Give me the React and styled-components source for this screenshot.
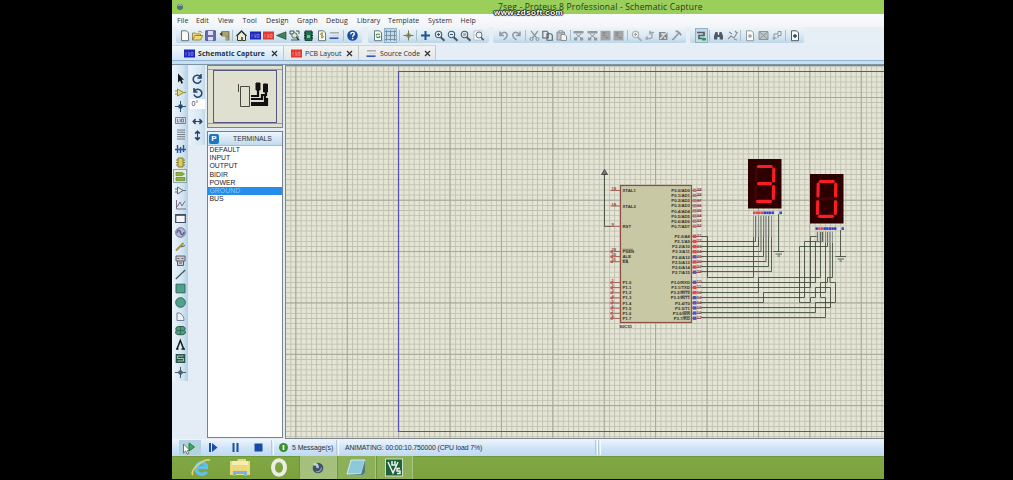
import React from "react";
import styled, { createGlobalStyle, css } from "styled-components";

const Global = createGlobalStyle`
  * { box-sizing: border-box; }
  html, body { margin: 0; background: #000; overflow: hidden; }
`;

const Screen = styled.div`
  width: 1013px;
  height: 480px;
  background: #000;
  padding-left: 172px;
  overflow: hidden;
`;
const Win = styled.div`
  width: 712px;
  height: 479px;
  display: flex;
  flex-direction: column;
  background: #e4edf5;
  overflow: hidden;
  font-family: "Open Sans", "Noto Sans", sans-serif;
  color: #2b2f36;
`;
const TitleBar = styled.header`
  position: relative;
  flex: 0 0 14px;
  background: #9bcf5c;
  display: flex;
  align-items: center;
`;
const TitleIcon = styled.svg`
  width: 8px;
  height: 8px;
  margin-left: 4px;
`;
const TitleText = styled.div`
  margin-left: 314px;
  font-size: 8.5px;
  letter-spacing: 0.18px;
  line-height: 14px;
  white-space: nowrap;
  color: #26391a;
`;
const Watermark = styled.div`
  position: absolute;
  left: 322px;
  top: 8px;
  z-index: 2;
  font: bold 8px/9px "Liberation Sans", sans-serif;
  letter-spacing: 0.45px;
  color: #fff;
  text-shadow: 0 0 1px #000, 1px 0 1px #222, -1px 0 1px #222, 0 1px 1px #222, 0 -1px 1px #222;
`;
const MenuBar = styled.nav`
  flex: 0 0 13px;
  background: linear-gradient(#f9fafb, #f2f5f8);
  display: flex;
  padding-left: 5px;
`;
const MenuItem = styled.span`
  width: ${(p) => p.$w}px;
  font-size: 7px;
  line-height: 13px;
  letter-spacing: 0.08px;
  white-space: nowrap;
`;
const ToolRow = styled.div`
  flex: 0 0 18px;
  display: flex;
  align-items: flex-start;
  padding-left: 4px;
  background: #e7eff6;
`;
const ToolGroup = styled.div`
  width: ${(p) => p.$w}px;
  height: 16px;
  margin-right: ${(p) => p.$gap || 0}px;
  padding-left: ${(p) => p.$pad}px;
  display: flex;
  align-items: center;
  background: linear-gradient(#eff5fa, #d5e6f2 65%, #bcd6e7);
  border-radius: 2px;
`;
const ToolButton = styled.span`
  flex: none;
  width: 13.3px;
  height: 15px;
  display: flex;
  align-items: center;
  justify-content: center;
  ${(p) => p.$on && css`
    background: #c3dae9;
    box-shadow: inset 0 0 0 1px #8fafc4;
  `}
`;
const ToolSep = styled.i`
  flex: none;
  width: 1px;
  height: 11px;
  margin: 0 1.7px;
  background: #a9bfce;
`;
const Glyph = styled.svg`
  width: 11px;
  height: 11px;
  flex: none;
  overflow: visible;
`;
const Tabs = styled.div`
  flex: 0 0 15px;
  display: flex;
  background: #e5eef6;
`;
const Tab = styled.div`
  width: ${(p) => p.$w}px;
  padding-left: ${(p) => p.$pad}px;
  display: flex;
  align-items: center;
  background: ${(p) => (p.$active ? "linear-gradient(#f1f8fd, #cfe4f5)" : "linear-gradient(#f2f2f1, #e4e6e8)")};
  border-right: 1px solid #bcc8d2;
  border-top: 1px solid #ccd6de;
  font-size: 6.9px;
  font-weight: ${(p) => (p.$active ? 700 : 400)};
`;
const TabLabel = styled.span`
  width: ${(p) => p.$w}px;
  margin-left: 3px;
  white-space: nowrap;
  letter-spacing: ${(p) => p.$ls || 0}px;
`;
const TabRule = styled.div`
  flex: 0 0 5px;
  background: linear-gradient(#8fb2d4 0 1px, #c8def3 1px 4px, #7d93a6 4px);
`;
const Body = styled.main`
  flex: 0 0 374px;
  display: flex;
`;
const ModeBar = styled.div`
  width: 16px;
  height: 316px;
  padding-top: 6px;
  display: flex;
  flex-direction: column;
  align-items: center;
  background: linear-gradient(90deg, #edf5fb, #cfe3f1 70%, #b1d0e4);
`;
const ModeButton = styled.span`
  flex: none;
  width: 14px;
  height: 14.03px;
  display: flex;
  align-items: center;
  justify-content: center;
  ${(p) => p.$on && css`
    background: #e7eddf;
    box-shadow: inset 0 0 0 1px #86a5b9;
  `}
`;
const OrientBar = styled.div`
  width: 16px;
  height: 80px;
  margin: 0 2px 0 1px;
  padding-top: 6px;
  display: flex;
  flex-direction: column;
  align-items: center;
  background: linear-gradient(90deg, #e9f2f9, #d6e6f2 75%, #c2d9ea);
`;
const Angle = styled.div`
  width: 15px;
  height: 10px;
  margin: 0 0 5px;
  background: #fff;
  font: 7px/10px "Liberation Sans", sans-serif;
  padding-left: 2px;
`;
const SideColumn = styled.aside`
  width: 78px;
  flex: none;
  display: flex;
  flex-direction: column;
`;
const Overview = styled.svg`
  width: 76px;
  height: 63px;
  margin-bottom: 3px;
  border: 1px solid #77828c;
  background: #dfe0d0;
`;
const Picker = styled.section`
  width: 76px;
  height: 307px;
  border: 1px solid #77828c;
  background: #fff;
  font-family: "Liberation Sans", sans-serif;
`;
const PickerHead = styled.div`
  height: 14px;
  display: flex;
  align-items: center;
  background: linear-gradient(#edf6fc, #bfdbf0);
  border-bottom: 1px solid #a7bccb;
  font-size: 6.8px;
`;
const PickBadge = styled.b`
  width: 10px;
  height: 10px;
  margin: 0 14px 0 1px;
  border-radius: 2px;
  background: #1b76c9;
  color: #fff;
  font-size: 8px;
  line-height: 10px;
  text-align: center;
`;
const PickItem = styled.div`
  height: 8.2px;
  padding-left: 1.5px;
  font-size: 6.9px;
  line-height: 8.8px;
  background: ${(p) => (p.$on ? "#248ee8" : "transparent")};
  color: ${(p) => (p.$on ? "#8cc8f5" : "#222")};
`;
const Canvas = styled.svg`
  width: 599px;
  height: 374px;
  display: block;
  flex: none;
`;
const StatusBar = styled.footer`
  flex: 0 0 17px;
  display: flex;
  align-items: center;
  background: linear-gradient(#eef5fb, #cfe3f6 55%, #c0d9f1);
  font: 6.9px/17px "Liberation Sans", sans-serif;
`;
const SimButton = styled.span`
  width: ${(p) => p.$w}px;
  height: 15px;
  display: flex;
  align-items: center;
  justify-content: center;
  background: ${(p) => (p.$on ? "#b4d3e2" : "none")};
`;
const StatusText = styled.span`
  width: ${(p) => p.$w}px;
  padding-left: ${(p) => p.$pad}px;
  white-space: nowrap;
  letter-spacing: ${(p) => p.$ls || 0}px;
`;
const Grip = styled.i`
  width: 3px;
  height: 15px;
  border-left: 1px solid #b4c9dc;
  border-right: 1px solid #f4f9fd;
`;
const TaskBar = styled.footer`
  flex: 0 0 23px;
  display: flex;
  background: linear-gradient(#6f983a 0 1px, #7fa744 1px, #7ca23f);
`;
const Task = styled.div`
  flex: none;
  width: ${(p) => p.$w}px;
  margin-right: ${(p) => p.$gap || 0}px;
  display: flex;
  align-items: center;
  justify-content: center;
  ${(p) => p.$open && css`
    background: ${p.$front ? "#a5c07c" : "#8bb057"};
    border-right: 1px solid #a9c680;
    border-left: 1px solid #6f963b;
  `}
`;
const TaskIcon = styled.svg`
  flex: none;
  width: 22px;
  height: 21px;
`;

const page = (c = "#68747e") => <path d="M2.5 .8h5l2 2.2v7.7h-7z" fill="#fbfbf6" stroke={c} />;
const chipIcon = (c) => (
  <>
    <rect x="0" y="1.5" width="11" height="8" fill={c} />
    <path d="M2 4v3.5M4 4.3h1.6M4 5.7h1.6v1.6H4M7 4.2v3.2M7 4.3h2v3H7" stroke="#fff" strokeOpacity=".5" strokeWidth=".7" fill="none" />
  </>
);
const mag = (c, extra) => (
  <>
    <path d="M6.5 7l4 3.8" stroke={c} strokeWidth="2" />
    <circle cx="4.5" cy="4.5" r="3.2" fill="#e2ebee" stroke={c} strokeWidth="1.1" />
    {extra}
  </>
);
const block = (c) => (
  <>
    <path d="M.5 1h10v2.6h-10zM1 7.5h3.2v3H1zM7 7.5h3.2v3H7z" fill={c} />
    <path d="M3 4l5 4M8 4L3 8" stroke={c} />
  </>
);

const ICONS = {
  new: page(),
  open: <path d="M.5 10V3h3l1 1h4v2M.5 10l2.3-4.5h8L8.5 10zM6 2.2c2-1.5 3-1 4 .5" fill="#f3d870" stroke="#827643" strokeWidth=".8" />,
  save: <><path d="M.7.8h9.6v9.6H.7z" fill="#6b6caf" stroke="#504f8c" /><path d="M3 1h5v4H3zM3 7h5v3.5H3z" fill="#dcdff0" /></>,
  import: <><path d="M2.5 1h8v9.5H6.5V6.5h-4z" fill="#8e8356" /><path d="M4 3h5M4 5h5M8 7v3" stroke="#d8d0a0" strokeWidth=".8" /><path d="M.5 4L3 2v4z" fill="#333" /></>,
  home: <><path d="M1.5 5.5v5h8v-5L5.5 1.5z" fill="#f0ead0" stroke="#3a3b31" /><path d="M.5 6l5-5 5 5" stroke="#23352b" strokeWidth="1.4" fill="none" /><path d="M5 7h2v3.5H5z" fill="#4c7b3a" /></>,
  isis: chipIcon("#1c28bd"),
  ares: chipIcon("#e5372f"),
  view3d: <path d="M.5 5.5L10 1.8v7.6z" fill="#3e8354" stroke="#2a4f3b" strokeWidth=".7" />,
  gerber: <><path d="M1 1h4v3H1zM7 1h3v3M2 10h7V6" fill="none" stroke="#3f5b4c" /><circle cx="5.5" cy="5.5" r="2.7" fill="#d9e4d5" stroke="#4c6c58" /><path d="M7.3 7.4l3 3" stroke="#333" strokeWidth="1.3" /></>,
  explorer: <><path d="M2 1h7v9.5H2z" fill="#19734f" stroke="#28453a" /><path d="M1 3h2M1 5.5h2M1 8h2M8 3h2M8 5.5h2M8 8h2" stroke="#222" /><path d="M4 5h3v3H4z" fill="#78c59c" /></>,
  bom: <>{page()}<path d="M7 3.3c-3-1-3 2-1 2.2s2 3-1 1.7M6 2.5v6" stroke="#9b8b20" fill="none" /></>,
  source: <><path d="M1 2.8h9" stroke="#aaa" strokeWidth="1.5" /><path d="M.5 8.2h9" stroke="#3c59bd" strokeWidth="1.7" /><path d="M3 5.5h7" stroke="#ced6e6" /></>,
  help: <><circle cx="5.5" cy="5.5" r="5.3" fill="#1b4fa4" /><path d="M3.8 4.2c0-2.6 3.7-2.3 3.5-.2C7.2 5.3 5.6 5.2 5.6 6.7M5.6 7.8v1.4" stroke="#fff" strokeWidth="1.4" fill="none" /></>,
  redraw: <>{page()}<path d="M4 5.5c.5-2 3-1.8 3.6-.4M8 6c-.5 2-3 2-3.6.4" stroke="#3c9341" fill="none" strokeWidth="1.2" /></>,
  grid: <path d="M1.5 0v11M5.5 0v11M9.5 0v11M0 1.5h11M0 5.5h11M0 9.5h11" stroke="#6b8398" strokeWidth=".8" />,
  origin: <path d="M5.5 .5v10M.5 5.5h10M5.5 3L8 5.5 5.5 8 3 5.5z" stroke="#77794b" fill="#c8ca95" />,
  pan: <path d="M5.5 1v9M1 5.5h9" stroke="#1f5195" strokeWidth="2" />,
  zin: mag("#4d5963", <path d="M4.5 3v3M3 4.5h3" stroke="#24539b" />),
  zout: mag("#4d5963", <path d="M3 4.5h3" stroke="#24539b" />),
  zall: mag("#4d5963", <path d="M3.2 3.3h2.6v2.4H3.2z" fill="#8e9aa4" />),
  zarea: <><path d="M1 1h7.5v9H1z" fill="#fff" stroke="#9aa5ad" strokeWidth=".6" /><circle cx="6" cy="5" r="3" fill="#eef3f5" stroke="#677581" /><path d="M8 7.3l2.7 3" stroke="#4c545b" strokeWidth="1.5" /></>,
  undo: <path d="M2 1.5v4h4M2.5 5C5 .8 10 2 9 6c-.4 2-2 3-3.5 4" stroke="#8f989f" fill="none" strokeWidth="1.5" />,
  redo: <path d="M9 1.5v4H5M8.5 5C6 .8 1 2 2 6c.4 2 2 3 3.5 4" stroke="#8f989f" fill="none" strokeWidth="1.5" />,
  cut: <><path d="M2 .8l5.5 7M9 .8l-5.5 7" stroke="#8b9094" strokeWidth="1.3" /><circle cx="2.5" cy="9" r="1.5" fill="none" stroke="#8b9094" /><circle cx="8.5" cy="9" r="1.5" fill="none" stroke="#8b9094" /></>,
  copy: <path d="M.8 1.2h4l1.4 1.5V8H.8zM5 3.7h3.8L10.3 5v5.3H5z" fill="#e3e9ee" stroke="#56636f" strokeWidth="1.1" />,
  paste: <><path d="M1 2h7.5v8H1z" fill="#c1bfc0" stroke="#8b8d92" /><path d="M3 .8h3.5v2H3zM5 4.5h3.7L10.5 6v4.5H5z" fill="#f1f2f3" stroke="#8b8d92" /></>,
  block: block("#93999e"),
  blockfill: <><path d="M.5 .8h10v9.6H.5z" fill="#a2a4a6" /><path d="M2.5 3h3M2.5 5.5h3M5.5 7.7h3" stroke="#86898c" strokeWidth="1.3" /></>,
  pick: mag("#aab1b6", <path d="M4.5 3v3M3 4.5h3" stroke="#b49b9b" />),
  make: <path d="M1 8.5h5a2 2 0 002-2V3M5 2.5h5M6 .8v4M3 6v4" stroke="#a2a9ae" fill="none" strokeWidth="1.4" />,
  pack: <><path d="M1 2h8.5v8H1z" fill="#858a8e" /><path d="M2 9l7-7M3 4h3M6 8h2" stroke="#e3e4e5" strokeWidth="1.3" /></>,
  hammer: <path d="M1.5 10l6-6.5M4.5 1.5c2.5-.5 4 .5 5.5 4" stroke="#8f969c" strokeWidth="1.7" fill="none" />,
  wire: <><path d="M1 2.5h7v3H3v3h5" stroke="#526065" fill="none" strokeWidth="1.7" /><path d="M6 8h4v2.5H6z" fill="#20a046" /></>,
  find: <path d="M1 9.5V6l1.5-4h2l.5 3h1l.5-3h2L10 6v3.5H6.7V7H4.3v2.5z" fill="#4c5965" />,
  prop: <path d="M1 9l3-3 3 2 3.5-6M2 2l3 2M7 9l3 1M8 1l2 2" stroke="#8c9195" fill="none" strokeWidth="1.2" />,
  addsheet: <>{page("#949da3")}<path d="M4 6h4M6 4v4" stroke="#81898f" /></>,
  delsheet: <path d="M1 1.5h9v8H1zM1 1.5l9 8M10 1.5l-9 8" stroke="#8c9498" fill="#bfc6ca" />,
  goto: <path d="M3 10V4h4V1.5h3v4H7V8M1.5 8h4" stroke="#8c9498" fill="none" />,
  erc: <>{page("#4d5b66")}<path d="M6 4v4M4 6h4" stroke="#26416d" strokeWidth="1.4" /></>,
  select: <path d="M3 .5v9l2-2 1.5 3.3 1.5-.7L6.6 6.8H9z" fill="#16191d" />,
  comp: <path d="M2.5 2v7L8.5 5.5zM0 4h2.5M0 7h2.5M8.5 5.5H11" fill="#e9dc80" stroke="#93883a" />,
  junction: <><path d="M5.5 0v11M0 5.5h11" stroke="#3b526e" /><circle cx="5.5" cy="5.5" r="2.3" fill="#244a75" /></>,
  label: <path d="M.5 2.5h10v6H.5zM2.5 3.8V7H4M5.2 4v3M6.5 4h2v3h-2z" fill="#d9dfec" stroke="#6c7398" strokeWidth=".9" />,
  script: <path d="M2 1h8M2 3.2h8M2 5.5h8M2 7.7h8M2 10h8" stroke="#747c84" />,
  bus: <path d="M0 6.5h11M2.5 2v8M5.5 4v6M8.5 2v7" stroke="#2b559c" strokeWidth="1.4" />,
  sub: <><path d="M1 3h9M1 5.5h9M1 8h9" stroke="#7d7635" /><path d="M3 1h5v9H3z" fill="#d9cf59" stroke="#877e31" /></>,
  term: <path d="M1 1.5h6l2.5 1.5L7 4.6H1zM1 6.5h9v3.2H1z" fill="#8db43a" stroke="#66832c" strokeWidth=".7" />,
  pin: <path d="M2.5 2v7L8 5.5zM8 5.5h3M0 4h2.5M0 7h2.5" fill="#eef0ee" stroke="#606c76" />,
  graph: <path d="M1.5 1v9H11M2 8l3-5 2 4 3-5" stroke="#7d6d80" fill="none" />,
  tape: <><path d="M.7 1.5h9.6v8H.7z" fill="#f4f6f8" stroke="#414d5e" strokeWidth="1.2" /><path d="M.7 2h9.6" stroke="#414d5e" strokeWidth="1.7" /></>,
  gen: <><circle cx="5.5" cy="5.5" r="4.8" fill="#b4b6d4" stroke="#6d6e9c" /><path d="M2 6c1-4 3-3 3.5-.5S8.5 9 9 5" fill="none" stroke="#5f5c8e" strokeWidth="1.4" /></>,
  probe: <><path d="M1 9.5L8.5 2" stroke="#a79342" strokeWidth="2" /><path d="M6 6l4-1.5" stroke="#555" /></>,
  instr: <path d="M1 1h9v5H1zM2.5 6v4.5h6V6M2.5 3.5h2M6.5 3.5h2M4 8h3" fill="#cfcbd0" stroke="#605c69" />,
  line: <path d="M.8 10L10.2 1" stroke="#43555a" strokeWidth="1.2" />,
  box: <path d="M1 1.2h9v8.6H1z" fill="#4fa28b" stroke="#36665b" />,
  circle: <circle cx="5.5" cy="5.5" r="4.8" fill="#4fa28b" stroke="#36665b" />,
  arc: <path d="M2 9.5V2c4-.5 7 2.5 7 7.5z" fill="#eff2f5" stroke="#747e98" />,
  path: <><path d="M3.3 1.5h4.4a2.5 2.5 0 012 4 2.5 2.5 0 01-2 4.2H3.3a2.5 2.5 0 01-2-4.2 2.5 2.5 0 012-4z" fill="#4f9c80" stroke="#2e5d4d" /><path d="M5.5 2v7.5M2 5.5h7" stroke="#2e5d4d" strokeWidth=".7" /></>,
  text: <path d="M1 10h2.5M6.5 10H10M2.2 9.5L5.3 1.5l3.2 8" fill="none" stroke="#181c20" strokeWidth="1.5" />,
  symbol: <><path d="M.7 1h9.6v9H.7z" fill="#28594a" /><path d="M8.5 3h-6v2.5h6V8h-6" fill="none" stroke="#a8c6b7" /></>,
  marker: <path d="M5.5 0v11M0 5.5h11M5.5 3L8 5.5 5.5 8 3 5.5z" stroke="#4a5c70" fill="#61717f" />,
  cw: <path d="M9 1v4H5.5M8.5 4A4 4 0 109 7.5" fill="none" stroke="#24436e" strokeWidth="1.5" />,
  ccw: <path d="M2 1v4h3.5M2.5 4A4 4 0 112 7.5" fill="none" stroke="#24436e" strokeWidth="1.5" />,
  fliph: <path d="M1 5.5h9M3.5 3L1 5.5 3.5 8M7.5 3L10 5.5 7.5 8" fill="#24436e" stroke="#24436e" strokeWidth="1.1" />,
  flipv: <path d="M5.5 1v9M3 3.5L5.5 1 8 3.5M3 7.5L5.5 10 8 7.5" fill="#24436e" stroke="#24436e" strokeWidth="1.1" />,
  close: <path d="M3 3l5 5M8 3L3 8" stroke="#30343a" strokeWidth="1.3" />,
  play: <><path d="M4 1l5.5 4L4 9z" fill="#35b44b" stroke="#207c36" /><path d="M-1.5 2v9l2.2-2 1.5 3.3 1.5-.8L2.5 8.500H5z" fill="#fff" stroke="#555" strokeWidth=".8" /></>,
  step: <path d="M1 1h2v9H1zM4 1l5.5 4.5L4 10z" fill="#1b4fa6" />,
  pause: <path d="M2.5 1h2v9h-2zM6.5 1h2v9h-2z" fill="#1b4fa6" />,
  stop: <path d="M1.5 1.5h8v8h-8z" fill="#164aa4" />,
  info: <><circle cx="5.5" cy="5.5" r="4.5" fill="#35922f" /><path d="M5.5 3v5" stroke="#fff" strokeWidth="1.7" /></>,
};

const Icon = ({ name }) => <Glyph viewBox="0 0 11 11">{ICONS[name]}</Glyph>;

const MENUS = [["File", 19], ["Edit", 22], ["View", 24.5], ["Tool", 23.5], ["Design", 31], ["Graph", 29], ["Debug", 31], ["Library", 31], ["Template", 40], ["System", 32.5], ["Help", 20]];

const GROUPS = [
  { w: 186, gap: 6, pad: 1.5, items: "new open save import | home isis ares view3d gerber explorer bom source | help" },
  { w: 121, gap: 4, pad: 2.5, items: "redraw grid* | origin | pan zin zout zall zarea" },
  { w: 193, gap: 4, pad: 4, items: "undo redo | cut copy paste | block block blockfill blockfill | pick make pack hammer" },
  { w: 114, gap: 0, pad: 4.5, items: "wire* | find prop | addsheet delsheet goto | erc" },
];

const MODES = "select comp junction label script bus sub term* pin graph tape gen probe instr line box circle arc path text symbol marker".split(" ");

const PICKS = ["DEFAULT", "INPUT", "OUTPUT", "BIDIR", "POWER", "GROUND", "BUS"];

const STEP = 5.13;
const rows = (y, labels) => labels.map((t, i) => ({ t, y: y + i * STEP }));
const RIGHT_PINS = [
  ...rows(190.5, ["P0.0/AD0", "P0.1/AD1", "P0.2/AD2", "P0.3/AD3", "P0.4/AD4", "P0.5/AD5", "P0.6/AD6", "P0.7/AD7"]),
  ...rows(236.5, ["P2.0/A8", "P2.1/A9", "P2.2/A10", "P2.3/A11", "P2.4/A12", "P2.5/A13", "P2.6/A14", "P2.7/A15"]),
  ...rows(282.5, ["P3.0/RXD", "P3.1/TXD", "P3.2/INT0", "P3.3/INT1", "P3.4/T0", "P3.5/T1", "P3.6/WR", "P3.7/RD"]),
];
const RIGHT_NUM = [39, 38, 37, 36, 35, 34, 33, 32, 21, 22, 23, 24, 25, 26, 27, 28, 10, 11, 12, 13, 14, 15, 16, 17];
const LEFT_PINS = [
  { t: "XTAL1", y: 190.5, n: 19 }, { t: "XTAL2", y: 206, n: 18 }, { t: "RST", y: 226.4, n: 9 },
  { t: "PSEN", y: 251.5, n: 29 }, { t: "ALE", y: 256.6, n: 30 }, { t: "EA", y: 261.7, n: 31 },
  ...rows(282.5, ["P1.0", "P1.1", "P1.2", "P1.3", "P1.4", "P1.5", "P1.6", "P1.7"]).map((p, i) => ({ ...p, n: i + 1 })),
];
const PIN_STATES = "rrrrbrrbbrrbbbbb".split("");

const WIRES = [
  "M701 236.5H707.5V277.5H753.5V216",
  "M701 241.5H755.5V216", "M701 246.5H758.5V216", "M701 251.5H761V216", "M701 256.5H763.5V216",
  "M701 261.5H766V216", "M701 266.5H768.5V216", "M701 271.5H771.5V216",
  "M701 282.5H815.5V241.5H817.5V232",
  "M701 287.5H810.5V236.5H817.5",
  "M701 292.5H758.5V277.5H820.5V232",
  "M701 297.5H804.5V241.5H822.5V232",
  "M701 302.5H763.5V292.5H825.5V232",
  "M701 307.5H830.5V287.5H815.5V297.5H810.5V302.5H799.5V246.5H827.5V232",
  "M701 312.5H815.5V302.5H835.5V282.5H830V232",
  "M701 317.5H825.5V297.5H820.5V282.5H827.5V277.5H832.5V232",
];

function Digit({ x, y, segs }) {
  const paint = (s) => (segs.includes(s) ? { stroke: "#fb1d21", strokeWidth: 3.2 } : { stroke: "#430405", strokeWidth: 3 });
  return (
    <g transform={`translate(${x} ${y})`} strokeLinecap="round">
      <rect width="33.5" height="49.5" fill="#2d0002" />
      <path d="M10.3 7.5H23.3" {...paint("a")} />
      <path d="M25.8 10L25.6 22" {...paint("b")} />
      <path d="M25.6 27.5L25.3 39.5" {...paint("c")} />
      <path d="M9.5 42.3H22.5" {...paint("d")} />
      <path d="M7.7 27.5L7.5 39.5" {...paint("e")} />
      <path d="M8.2 10L8 22" {...paint("f")} />
      <path d="M10.5 24.7H22.5" {...paint("g")} />
    </g>
  );
}

function Pads({ x, y, colors }) {
  return colors.map((c, i) => <rect key={i} x={x + i * 2.65} y={y} width="2.4" height="2.6" fill={c === "r" ? "#e8414d" : "#303bd2"} />);
}

function Schematic() {
  return (
    <Canvas viewBox="285 65 599 374">
      <defs>
        <pattern id="minor" x="295.5" y="97" width="5.14" height="5.14" patternUnits="userSpaceOnUse">
          <path d="M0 .5H5.14M.5 0V5.14" stroke="#bfc0b0" strokeWidth=".9" />
        </pattern>
        <pattern id="major" x="295.3" y="97" width="51.4" height="51.35" patternUnits="userSpaceOnUse">
          <path d="M0 .5H51.4M.5 0V51.35" stroke="#a6a79a" strokeWidth="1" />
        </pattern>
      </defs>
      <rect x="285" y="65" width="599" height="374" fill="#e5e5d6" />
      <rect x="285" y="65" width="599" height="374" fill="url(#minor)" />
      <rect x="285" y="65" width="599" height="374" fill="url(#major)" />
      <path d="M285.5 439V65.5H884M285 438.5H884" stroke="#7e8689" fill="none" />
      <path d="M884 71.5H398.5V431.5H884" stroke="#5350b0" strokeWidth="1.2" fill="none" />

      <g fill="none" stroke="#3c493b" strokeWidth=".85">
        {WIRES.map((d) => <path key={d} d={d} />)}
        <path d="M604.5 174V226.4H611" />
        <path d="M778.5 214V251.5M773.5 251.5H784M775.5 254H782M777.5 256H780" />
        <path d="M840.5 230V256.5M835.5 256.5H846M837.5 259H844M839.5 261H842" />
      </g>
      <path d="M604.5 169.5L601.5 174.5H607.5z" fill="#777a69" stroke="#333" strokeWidth=".8" />
      <g stroke="#a5a5aa" strokeWidth=".8">
        {[0, 1, 2, 3, 4, 5, 6, 7].map((i) => <path key={i} d={`M${753.5 + i * 2.6} 215V237M${817 + i * 2.2} 231V243`} />)}
      </g>

      <rect x="620.5" y="185.5" width="71" height="137" fill="#c8c8a5" stroke="#8c5048" strokeWidth="1.2" />
      <g fontFamily="Liberation Sans, sans-serif" fontSize="4.3" fontWeight="bold" fill="#33332a">
        {RIGHT_PINS.map((p) => <text key={p.t} x="690" y={p.y + 1.5} textAnchor="end">{p.t}</text>)}
        {LEFT_PINS.map((p) => <text key={p.t} x="622.5" y={p.y + 1.5}>{p.t}</text>)}
        <text x="619.5" y="328">80C51</text>
      </g>
      <path d="M622.5 249.3H633M622.5 260H628M681 291H690M681 296H690M683 311.5H690M683 316.5H690" stroke="#333" strokeWidth=".5" />
      <g fontFamily="Liberation Sans, sans-serif" fontSize="4.2" fontWeight="bold" fill="#8a4543">
        {RIGHT_PINS.map((p, i) => (
          <g key={p.t}>
            <path d={`M692 ${p.y}H701`} stroke="#a45451" strokeWidth=".9" />
            <rect x="692.8" y={p.y - 1.9} width="3.6" height="3.4" fill={i < 8 ? "#a58680" : PIN_STATES[i - 8] === "r" ? "#e14b50" : "#5553c5"} />
            <text x="696.8" y={p.y + 0.8}>{RIGHT_NUM[i]}</text>
          </g>
        ))}
        {LEFT_PINS.map((p) => (
          <g key={p.t}>
            <path d={`M610.5 ${p.y}H620`} stroke="#a45451" strokeWidth=".9" />
            <text x="611.5" y={p.y - 0.3}>{p.n}</text>
            {p.y > 250 && <rect x="610.5" y={p.y - 1.2} width="2.5" height="2.5" fill="#b85d59" />}
          </g>
        ))}
      </g>

      <Digit x={748} y={159} segs="abcdg" />
      <Digit x={810} y={174} segs="abcdef" />
      <Pads x={753} y={211.5} colors={"rrrrbbbb".split("")} />
      <Pads x={779.5} y={211.5} colors={["b"]} />
      <Pads x={815.5} y={227.3} colors={"brrbbbbb".split("")} />
      <Pads x={841.5} y={227.3} colors={["b"]} />
    </Canvas>
  );
}

const renderTools = (items) =>
  items.split(" ").map((n, i) =>
    n === "|" ? <ToolSep key={i} /> : <ToolButton key={i} $on={n.endsWith("*")}><Icon name={n.replace("*", "")} /></ToolButton>
  );

export default function App() {
  return (
    <Screen>
      <Global />
      <Win>
        <TitleBar>
          <TitleIcon viewBox="0 0 8 8">
            <circle cx="4" cy="4" r="3" fill="#536f78" />
            <path d="M2 3c1-2 3-1 4 0" stroke="#c7dbe3" fill="none" />
          </TitleIcon>
          <TitleText>7seg - Proteus 8 Professional - Schematic Capture</TitleText>
          <Watermark>www.zdsoft.com</Watermark>
        </TitleBar>
        <MenuBar>
          {MENUS.map(([t, w]) => <MenuItem key={t} $w={w}>{t}</MenuItem>)}
        </MenuBar>
        <ToolRow>
          {GROUPS.map((g) => <ToolGroup key={g.items} $w={g.w} $gap={g.gap} $pad={g.pad}>{renderTools(g.items)}</ToolGroup>)}
        </ToolRow>
        <Tabs>
          <Tab $w={112} $pad={12} $active><Icon name="isis" /><TabLabel $w={71} $ls={0.12}>Schematic Capture</TabLabel><Icon name="close" /></Tab>
          <Tab $w={75} $pad={7}><Icon name="ares" /><TabLabel $w={38.5}>PCB Layout</TabLabel><Icon name="close" /></Tab>
          <Tab $w={77} $pad={7}><Icon name="source" /><TabLabel $w={42} $ls={-0.05}>Source Code</TabLabel><Icon name="close" /></Tab>
        </Tabs>
        <TabRule />
        <Body>
          <ModeBar>
            {MODES.map((n) => <ModeButton key={n} $on={n.endsWith("*")}><Icon name={n.replace("*", "")} /></ModeButton>)}
          </ModeBar>
          <OrientBar>
            <ModeButton><Icon name="cw" /></ModeButton>
            <ModeButton><Icon name="ccw" /></ModeButton>
            <Angle>0°</Angle>
            <ModeButton><Icon name="fliph" /></ModeButton>
            <ModeButton><Icon name="flipv" /></ModeButton>
          </OrientBar>
          <SideColumn>
            <Overview viewBox="208 66 74 61">
              <path d="M208 69.5H282M208 123.5H282" stroke="#6fb95a" strokeWidth="1.2" />
              <rect x="213.5" y="70.5" width="63" height="52" fill="none" stroke="#545683" />
              <path d="M240.5 86.5H249.5V106.5H240.5zM238.5 84V92" fill="none" stroke="#45483f" />
              <path d="M256 83h4v7h-4zM263.5 84h4v8h-4z" fill="#111" stroke="#111" />
              <path d="M251 96h7v-6M251 99h11v-4h4v-3M251 103h14v-9M251 105h16v-7" fill="none" stroke="#111" strokeWidth="2.2" />
            </Overview>
            <Picker>
              <PickerHead><PickBadge>P</PickBadge>TERMINALS</PickerHead>
              {PICKS.map((t) => <PickItem key={t} $on={t === "GROUND"}>{t}</PickItem>)}
            </Picker>
          </SideColumn>
          <Schematic />
        </Body>
        <StatusBar>
          <SimButton $w={7} />
          <SimButton $w={22} $on><Icon name="play" /></SimButton>
          <SimButton $w={24}><Icon name="step" /></SimButton>
          <SimButton $w={20}><Icon name="pause" /></SimButton>
          <SimButton $w={26}><Icon name="stop" /></SimButton>
          <Grip />
          <SimButton $w={18}><Icon name="info" /></SimButton>
          <StatusText $w={44} $pad={0} $ls={-0.05}>5 Message(s)</StatusText>
          <Grip />
          <StatusText $w={256} $pad={6} $ls={-0.1}>ANIMATING: 00:00:10.750000 (CPU load 7%)</StatusText>
          <Grip />
          <Grip />
        </StatusBar>
        <TaskBar>
          <Task $w={58}>
            <TaskIcon viewBox="0 0 22 21">
              <path d="M16.5 15c-3 4-10.5 2.500-10.500-4S16.500 4 16.500 10.500H6.500" fill="none" stroke="#5fc0ee" strokeWidth="3.4" />
              <path d="M3 18C-1 14 12 2 20 3" fill="none" stroke="#e9d267" strokeWidth="1.6" />
            </TaskIcon>
          </Task>
          <Task $w={20} $gap={8}>
            <TaskIcon viewBox="0 0 22 21">
              <path d="M1 4h7l1-2h8v2h4v14H1z" fill="#ecd87d" />
              <path d="M3 4h16v4H3z" fill="#f6ecb6" />
              <path d="M4 19v-5h14v5h-3v-2H7v2z" fill="#74b5d8" />
            </TaskIcon>
          </Task>
          <Task $w={41}>
            <TaskIcon viewBox="0 0 22 21">
              <ellipse cx="11" cy="10.5" rx="6" ry="7.3" fill="none" stroke="#eceee6" strokeWidth="4" />
            </TaskIcon>
          </Task>
          <Task $w={38} $open $front>
            <TaskIcon viewBox="0 0 22 21">
              <circle cx="11" cy="11" r="5.3" fill="#3f5268" />
              <path d="M6.500 7.500c3-1 4.500 1 4 3.500" stroke="#c3d2dc" strokeWidth="2.4" fill="none" />
              <path d="M9 14.500c3 1 5-1 5.500-4" stroke="#8fa5b8" strokeWidth="1.2" fill="none" />
            </TaskIcon>
          </Task>
          <Task $w={38.5} $open>
            <TaskIcon viewBox="0 0 22 21">
              <path d="M6 3h14l-4 14H2z" fill="#8ccadb" stroke="#d4ecef" />
              <path d="M2 17h14l4-14v13l-3 2z" fill="#557c7d" />
            </TaskIcon>
          </Task>
          <Task $w={37.5} $open>
            <TaskIcon viewBox="0 0 22 21">
              <rect x="2.5" y="2" width="17" height="17" fill="#1d613b" stroke="#cfe0ca" />
              <path d="M5 5l5 11 5-11M9 4v4h3V4M17 11.5h-3v2.5h3v2.5h-3" fill="none" stroke="#f1f5ef" strokeWidth="1.5" />
            </TaskIcon>
          </Task>
        </TaskBar>
      </Win>
    </Screen>
  );
}
